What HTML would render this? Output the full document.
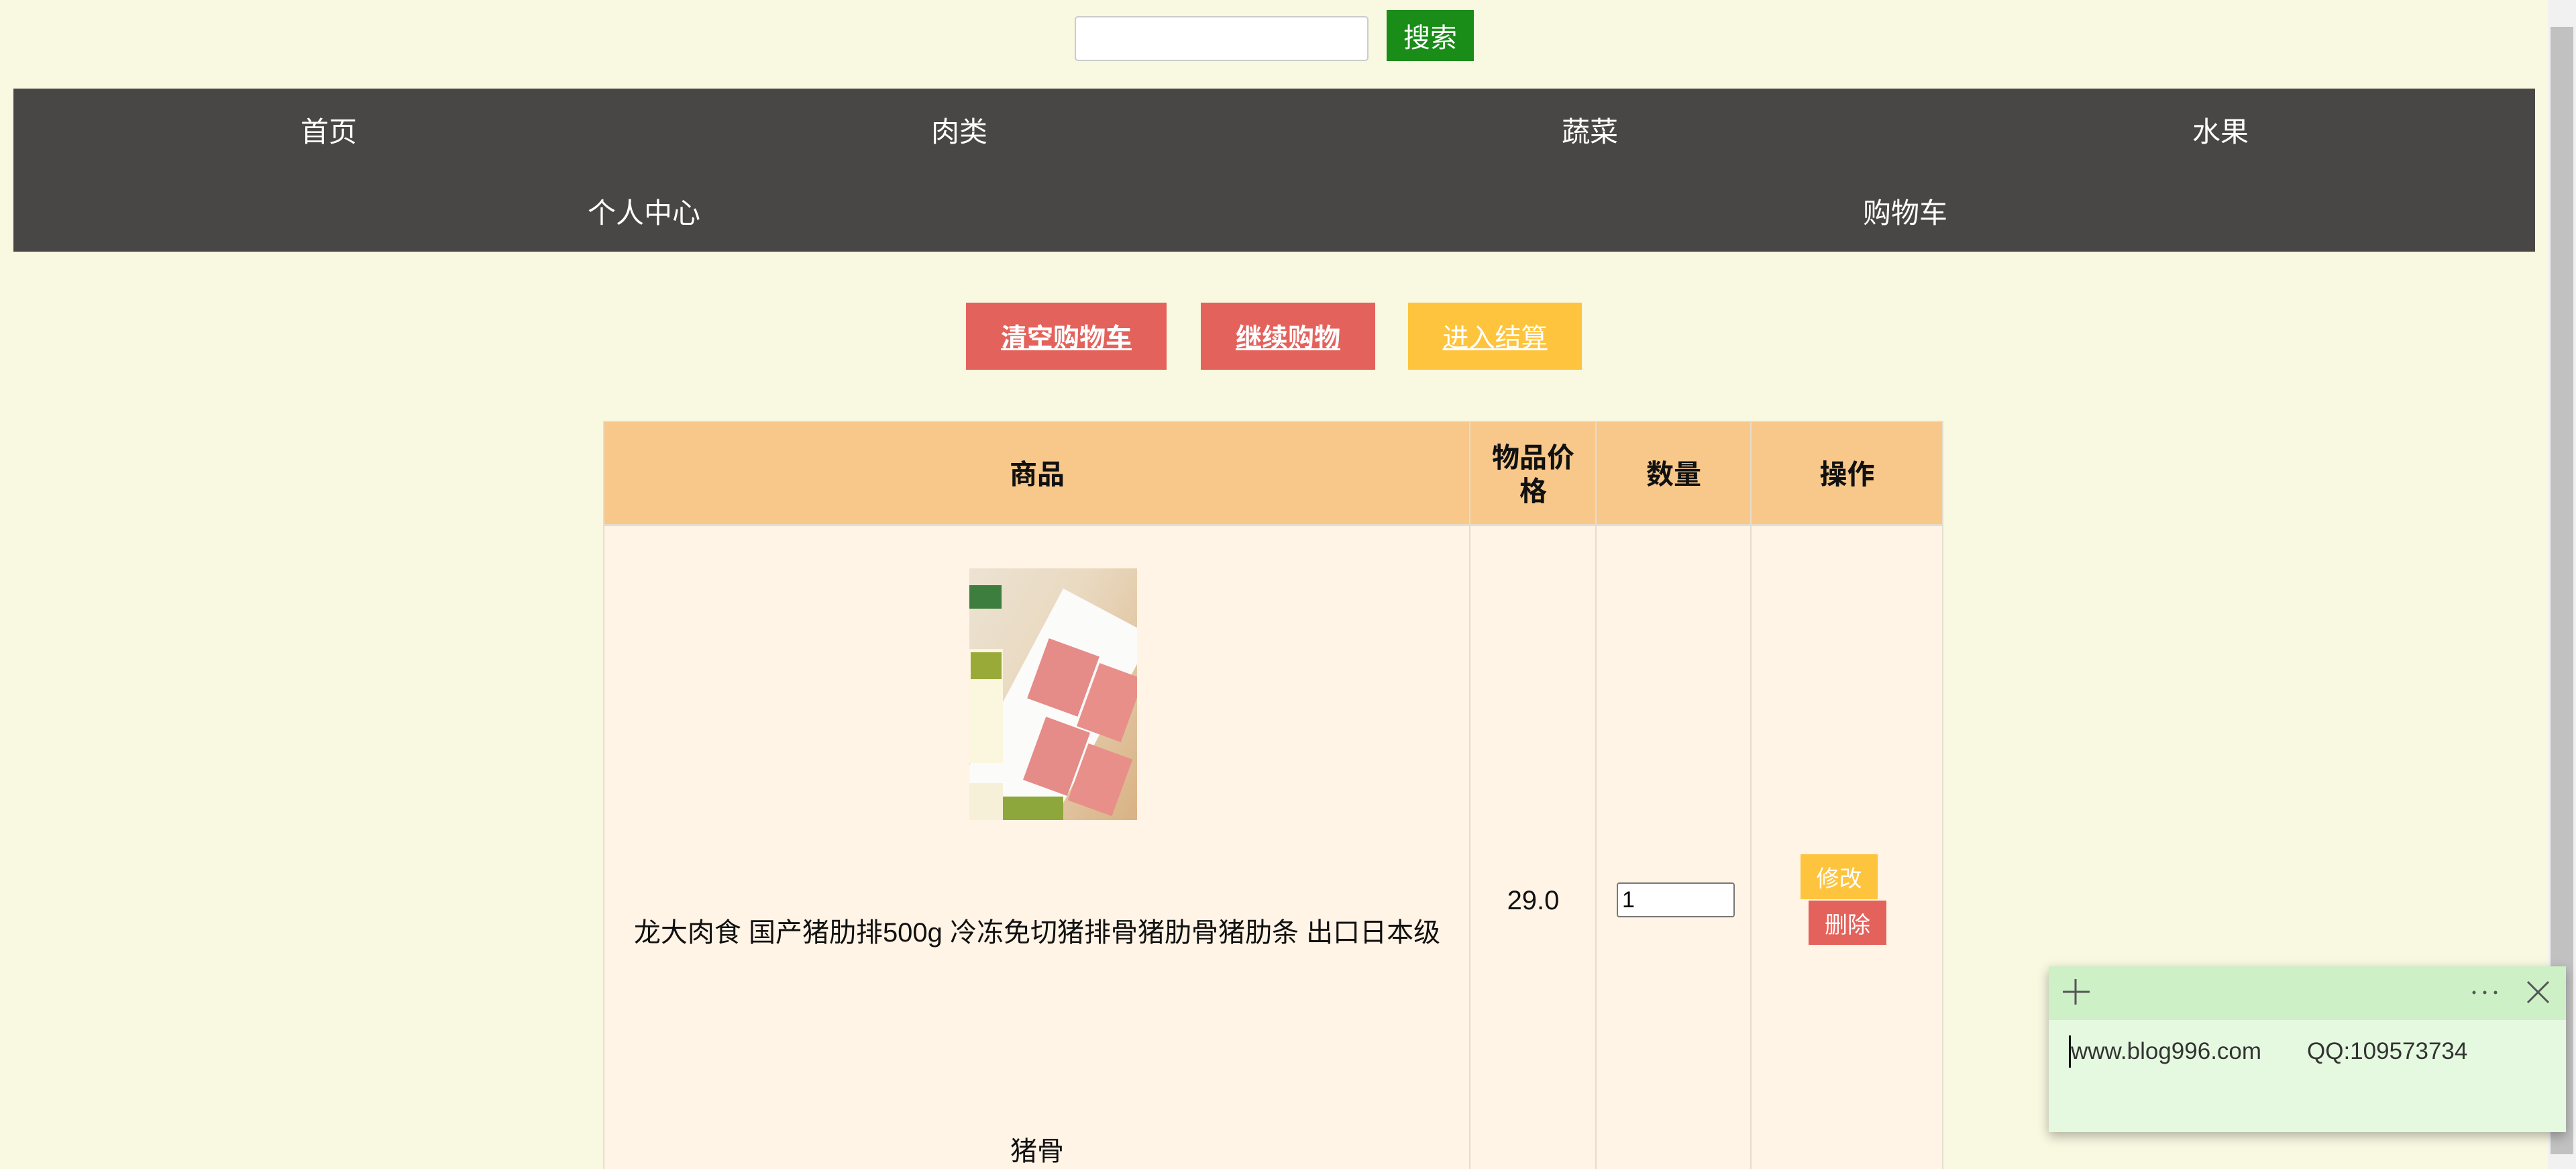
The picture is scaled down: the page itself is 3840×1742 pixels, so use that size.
<!DOCTYPE html>
<html><head><meta charset="utf-8"><style>
*{margin:0;padding:0;box-sizing:border-box}
html,body{width:3840px;height:1742px;overflow:hidden}
body{background:#f9f8e0;position:relative;font-family:"Liberation Sans","Noto Sans CJK SC",sans-serif}
.a{position:absolute}
.c{display:flex;align-items:center;justify-content:center;text-align:center}
.nav{color:#fff;font-size:42px}
.btn{color:#fff;font-size:39px;font-weight:bold;text-decoration:underline}
.th{font-size:41px;font-weight:bold;color:#111;line-height:50px}
.bd{border-right:2px solid #e6dccd}
</style></head><body>
<div class="a" style="left:1602px;top:24px;width:438px;height:67px;background:#fff;border:2px solid #ccc;border-radius:5px"></div>
<div class="a c" style="left:2067px;top:15px;width:130px;height:76px;background:#1a8c18;color:#fff;font-size:40px">搜索</div>

<div class="a" style="left:20px;top:132px;width:3759px;height:243px;background:#494745"></div>
<div class="a c nav" style="left:20px;top:132px;width:940px;height:122px">首页</div>
<div class="a c nav" style="left:960px;top:132px;width:940px;height:122px">肉类</div>
<div class="a c nav" style="left:1900px;top:132px;width:940px;height:122px">蔬菜</div>
<div class="a c nav" style="left:2840px;top:132px;width:940px;height:122px">水果</div>
<div class="a c nav" style="left:20px;top:254px;width:1880px;height:121px">个人中心</div>
<div class="a c nav" style="left:1900px;top:254px;width:1880px;height:121px">购物车</div>

<div class="a c btn" style="left:1440px;top:451px;width:299px;height:100px;background:#e4625c">清空购物车</div>
<div class="a c btn" style="left:1790px;top:451px;width:260px;height:100px;background:#e4625c">继续购物</div>
<div class="a c btn" style="left:2099px;top:451px;width:259px;height:100px;background:#fec43d;font-weight:normal">进入结算</div>

<div class="a" style="left:899px;top:627px;width:1998px;height:1115px;background:#fff4e6;border:2px solid #e4ddd0;border-bottom:none"></div>
<div class="a" style="left:901px;top:629px;width:1994px;height:155px;background:#f8c88a;border-bottom:3px solid #e6dccd"></div>
<div class="a bd" style="left:2190px;top:629px;width:2px;height:1113px"></div>
<div class="a bd" style="left:2378px;top:629px;width:2px;height:1113px"></div>
<div class="a bd" style="left:2609px;top:629px;width:2px;height:1113px"></div>
<div class="a c th" style="left:901px;top:629px;width:1290px;height:155px">商品</div>
<div class="a c th" style="left:2192px;top:629px;width:187px;height:155px">物品价<br>格</div>
<div class="a c th" style="left:2380px;top:629px;width:230px;height:155px">数量</div>
<div class="a c th" style="left:2611px;top:629px;width:285px;height:155px">操作</div>

<div class="a" style="left:1445px;top:847px;width:250px;height:375px;background:linear-gradient(120deg,#ece3d3,#e9d9c0 40%,#d9b284);overflow:hidden">
<div class="a" style="width:150px;height:330px;background:#fbfbfa;transform:rotate(28deg);transform-origin:top left;left:140px;top:30px"></div>
<div class="a" style="left:100px;top:115px;width:80px;height:95px;background:#e58b88;transform:rotate(20deg)"></div>
<div class="a" style="left:175px;top:150px;width:70px;height:100px;background:#e88f8a;transform:rotate(20deg)"></div>
<div class="a" style="left:95px;top:230px;width:70px;height:100px;background:#e58b88;transform:rotate(20deg)"></div>
<div class="a" style="left:160px;top:270px;width:70px;height:90px;background:#e88f8a;transform:rotate(20deg)"></div>
<div class="a" style="left:0;top:25px;width:48px;height:35px;background:#3d7d3d"></div>
<div class="a" style="left:0;top:120px;width:50px;height:170px;background:#fbf6de"></div>
<div class="a" style="left:2px;top:125px;width:46px;height:40px;background:#9aaa38"></div>
<div class="a" style="left:0;top:320px;width:50px;height:55px;background:#f7f0d8"></div>
<div class="a" style="left:50px;top:340px;width:90px;height:35px;background:#8ea73c"></div>
</div>

<div class="a c" style="left:901px;top:1356px;width:1290px;height:60px;font-size:40px;color:#111">龙大肉食 国产猪肋排500g 冷冻免切猪排骨猪肋骨猪肋条 出口日本级</div>
<div class="a c" style="left:901px;top:1682px;width:1290px;height:60px;font-size:40px;color:#111">猪骨</div>
<div class="a c" style="left:2192px;top:1312px;width:187px;height:60px;font-size:40px;color:#111">29.0</div>
<div class="a" style="left:2410px;top:1315px;width:176px;height:52px;background:#fff;border:2px solid #777;border-radius:4px;font-size:34px;padding-left:6px;line-height:48px">1</div>
<div class="a c" style="left:2684px;top:1273px;width:115px;height:67px;background:#fec43d;color:#fff;font-size:34px">修改</div>
<div class="a c" style="left:2696px;top:1342px;width:116px;height:66px;background:#e4625c;color:#fff;font-size:34px">删除</div>

<div class="a" style="left:3798px;top:0;width:42px;height:1742px;background:#f1f1f1"></div>
<div class="a" style="left:3802px;top:40px;width:34px;height:1680px;background:#c1c1c1"></div>

<div class="a" style="left:3054px;top:1440px;width:771px;height:247px;background:#e5f8e0;box-shadow:0 6px 16px rgba(0,0,0,.3)"></div>
<div class="a" style="left:3054px;top:1440px;width:771px;height:80px;background:#cdf0c6"></div>
<svg class="a" style="left:3054px;top:1440px" width="771" height="80">
<path d="M21 38H61M40 19V57" stroke="#555" stroke-width="3"/>
<circle cx="634" cy="39" r="2.5" fill="#555"/><circle cx="650" cy="39" r="2.5" fill="#555"/><circle cx="666" cy="39" r="2.5" fill="#555"/>
<path d="M714 23L745 54M745 23L714 54" stroke="#555" stroke-width="3"/>
</svg>
<div class="a" style="left:3084px;top:1543px;width:3px;height:48px;background:#111"></div>
<div class="a" style="left:3087px;top:1543px;font-size:35px;color:#333;line-height:48px">www.blog996.com</div>
<div class="a" style="left:3439px;top:1543px;font-size:35px;color:#333;line-height:48px">QQ:109573734</div>
</body></html>
